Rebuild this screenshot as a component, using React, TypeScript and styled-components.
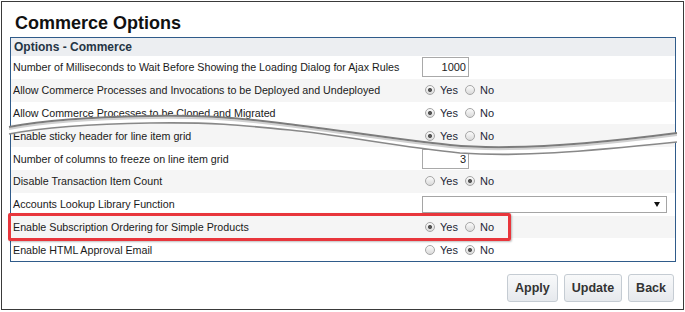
import React from 'react';
import styled, { createGlobalStyle, css } from 'styled-components';

const Global = createGlobalStyle`
  html, body { margin: 0; padding: 0; background: #fff; }
  body { font-family: "Liberation Sans", Arial, sans-serif; color: #1a1a1a; }
`;

const Frame = styled.div`
  position: relative;
  box-sizing: border-box;
  width: 683px;
  height: 309px;
  margin: 1px 0 0 1px;
  border: 1px solid #3a3a3a;
  padding: 11px 7px 0 8px;
  display: flex;
  flex-direction: column;
`;

const Title = styled.h1`
  margin: 0 0 3px;
  padding-left: 5px;
  font-size: 18px;
  line-height: 21px;
  font-weight: bold;
  color: #111;
`;

const Panel = styled.div`
  border: 1px solid #2f5b8a;
  background: #fff;
`;

const PanelHeader = styled.div`
  height: 18px;
  display: flex;
  align-items: center;
  padding-left: 3px;
  background: #eceef1;
  font-size: 12px;
  font-weight: bold;
  color: #253545;
`;

const Row = styled.div<{ $alt?: boolean }>`
  position: relative;
  height: 22.8px;
  display: grid;
  grid-template-columns: 411px 1fr;
  align-items: center;
  background: ${(p) => (p.$alt ? '#f5f5f5' : '#fff')};
`;

const Label = styled.div`
  padding-left: 2px;
  font-size: 10.7px;
  white-space: nowrap;
  color: #1a1a1a;
`;

const Value = styled.div`
  display: flex;
  align-items: center;
`;

const NumInput = styled.input`
  box-sizing: border-box;
  width: 47px;
  height: 20px;
  border: 1px solid #a9a9a9;
  padding: 0 2px;
  margin: 0;
  font-family: "Liberation Sans", Arial, sans-serif;
  font-size: 11px;
  text-align: right;
  color: #222;
  background: #fff;
`;

const RadioGroup = styled.div`
  display: flex;
  align-items: center;
  padding-left: 3px;
`;

const RadioLabel = styled.label`
  display: flex;
  align-items: center;
  font-size: 11px;
  color: #1d2636;
  margin-right: 7px;
`;

const RadioInput = styled.input<{ $on?: boolean }>`
  appearance: none;
  -webkit-appearance: none;
  box-sizing: border-box;
  width: 10px;
  height: 10px;
  margin: 0 5px 0 0;
  border-radius: 50%;
  border: 1px solid #a6a6a6;
  background: linear-gradient(#fbfbfb, #dadada);
  ${(p) =>
    p.$on &&
    css`
      background: radial-gradient(circle, #555 0, #555 1.6px, transparent 2.4px),
        linear-gradient(#fbfbfb, #dadada);
    `}
`;

const SelectBox = styled.div`
  box-sizing: border-box;
  width: 245px;
  height: 17px;
  border: 1px solid #a5a5a5;
  background: #fff;
  display: flex;
  align-items: center;
  justify-content: flex-end;
  padding-right: 6px;
`;

const Highlight = styled.div`
  position: absolute;
  left: -3px;
  top: -3px;
  width: 503px;
  height: 28px;
  box-sizing: border-box;
  border: 3px solid #e8363c;
  border-radius: 2px;
  box-shadow: 1px 1px 2px rgba(0, 0, 0, 0.25);
  pointer-events: none;
  z-index: 3;
`;

const Footer = styled.div`
  display: flex;
  justify-content: flex-end;
  gap: 6px;
  margin-top: 12px;
  padding-right: 2px;
`;

const Button = styled.button`
  box-sizing: border-box;
  height: 28px;
  padding: 0 7px;
  border: 1px solid #c5ccd3;
  border-radius: 3px;
  background: linear-gradient(#f8f9fa, #e6e9ed);
  font-family: "Liberation Sans", Arial, sans-serif;
  font-size: 12.5px;
  font-weight: bold;
  color: #333;
`;

const Tear = styled.svg`
  position: absolute;
  left: -2px;
  top: -2px;
  width: 685px;
  height: 200px;
  pointer-events: none;
  z-index: 2;
`;

const upper = 'M 9 127 C 40 121 90 117 150 116 C 200 115 235 117 280 123 C 330 129 400 140 450 145 C 500 150 570 147 677 133';
const lowerRev = 'L 677 142 C 580 152 520 157 460 153 C 400 147 340 135 290 130 C 240 125 210 122 150 123 C 90 124 40 128 9 134 Z';
const lower = 'M 9 134 C 40 128 90 124 150 123 C 210 122 240 125 290 130 C 340 135 400 147 460 153 C 520 157 580 152 677 142';

type Kind =
  | { type: 'input'; value: string }
  | { type: 'radio'; yes: boolean }
  | { type: 'select' };

const rows: { label: string; kind: Kind; mark?: boolean }[] = [
  { label: 'Number of Milliseconds to Wait Before Showing the Loading Dialog for Ajax Rules', kind: { type: 'input', value: '1000' } },
  { label: 'Allow Commerce Processes and Invocations to be Deployed and Undeployed', kind: { type: 'radio', yes: true } },
  { label: 'Allow Commerce Processes to be Cloned and Migrated', kind: { type: 'radio', yes: true } },
  { label: 'Enable sticky header for line item grid', kind: { type: 'radio', yes: true } },
  { label: 'Number of columns to freeze on line item grid', kind: { type: 'input', value: '3' } },
  { label: 'Disable Transaction Item Count', kind: { type: 'radio', yes: false } },
  { label: 'Accounts Lookup Library Function', kind: { type: 'select' } },
  { label: 'Enable Subscription Ordering for Simple Products', kind: { type: 'radio', yes: true }, mark: true },
  { label: 'Enable HTML Approval Email', kind: { type: 'radio', yes: false } },
];

function Radios({ yes, name }: { yes: boolean; name: string }) {
  return (
    <RadioGroup>
      <RadioLabel>
        <RadioInput type="radio" name={name} $on={yes} checked={yes} readOnly />
        Yes
      </RadioLabel>
      <RadioLabel>
        <RadioInput type="radio" name={name} $on={!yes} checked={!yes} readOnly />
        No
      </RadioLabel>
    </RadioGroup>
  );
}

export default function App() {
  return (
    <>
      <Global />
      <Frame>
        <Title>Commerce Options</Title>
        <Panel>
          <PanelHeader>Options - Commerce</PanelHeader>
          {rows.map((r, i) => (
            <Row key={i} $alt={i % 2 === 1}>
              <Label>{r.label}</Label>
              <Value>
                {r.kind.type === 'input' && <NumInput defaultValue={r.kind.value} />}
                {r.kind.type === 'radio' && <Radios yes={r.kind.yes} name={`opt${i}`} />}
                {r.kind.type === 'select' && (
                  <SelectBox>
                    <svg width="6" height="5" viewBox="0 0 6 5">
                      <polygon points="0,0 6,0 3,5" fill="#111" />
                    </svg>
                  </SelectBox>
                )}
              </Value>
              {r.mark && <Highlight />}
            </Row>
          ))}
        </Panel>
        <Footer>
          <Button>Apply</Button>
          <Button>Update</Button>
          <Button>Back</Button>
        </Footer>
        <Tear viewBox="0 0 685 200">
          <path d={upper + ' ' + lowerRev} fill="#fff" />
          <path d={upper} fill="none" stroke="#d0d0d0" strokeWidth="2" transform="translate(0 2)" />
          <path d={upper} fill="none" stroke="#7c7c7c" strokeWidth="2" />
          <path d={lower} fill="none" stroke="#888" strokeWidth="1.7" />
        </Tear>
      </Frame>
    </>
  );
}
